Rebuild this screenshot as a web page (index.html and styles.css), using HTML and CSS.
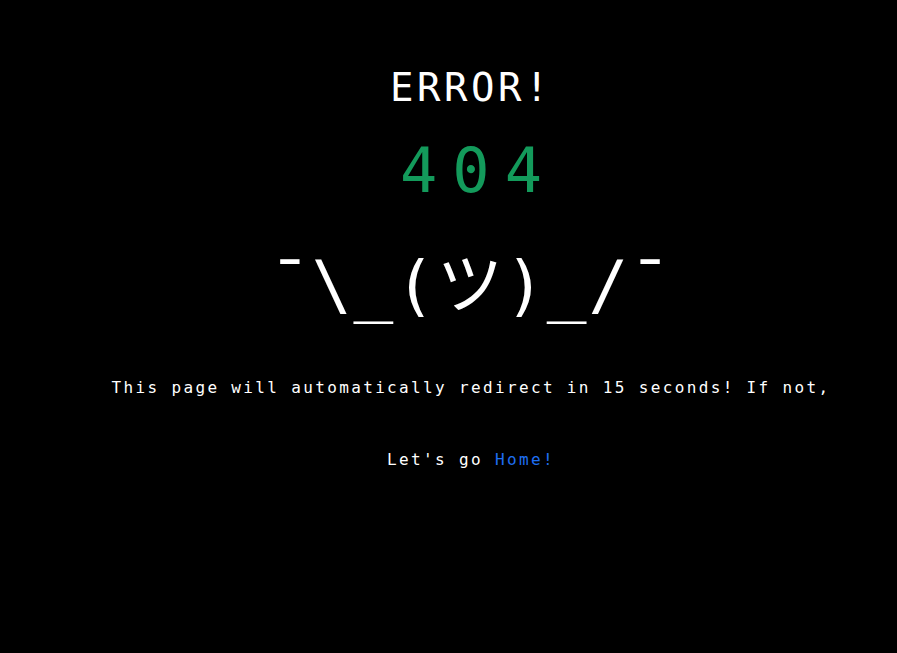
FILE: index.html
```html
<!DOCTYPE html>
<html>
<head>
<meta charset="utf-8">
<link rel="stylesheet" href="styles.css">
</head>
<body>
<main class="page">
  <h1 class="title">ERROR!</h1>
  <div class="code">404</div>
  <div class="shrug">¯\_(ツ)_/¯</div>
  <p class="msg">This page will automatically redirect in 15 seconds! If not,</p>
  <p class="msg">Let's go <a class="home" href="#">Home!</a></p>
</main>
</body>
</html>
```
FILE: styles.css
```css
html, body {
  margin: 0;
  padding: 0;
  background: #000;
}
body {
  width: 897px;
  height: 653px;
  overflow: hidden;
  color: #fff;
  font-family: "DejaVu Sans Mono", "Noto Sans CJK JP", monospace;
}
.page {
  display: flex;
  flex-direction: column;
  align-items: center;
  padding: 64px 0 0 45px;
  text-align: center;
}
.title {
  margin: 0;
  font-size: 39px;
  font-weight: 400;
  line-height: 48px;
  letter-spacing: 3.5px;
}
.code {
  margin-top: 24px;
  padding-left: 15px;
  font-size: 62px;
  line-height: 70px;
  letter-spacing: 15px;
  color: #139a5b;
}
.shrug {
  margin-top: 40px;
  font-size: 66px;
  line-height: 80px;
  letter-spacing: 2px;
}
.msg {
  margin: 50px 0 0;
  font-size: 16px;
  line-height: 24px;
  letter-spacing: 2.35px;
}
.msg + .msg {
  margin-top: 48px;
}
.home {
  color: #1f6ff2;
  text-decoration: none;
}
```
